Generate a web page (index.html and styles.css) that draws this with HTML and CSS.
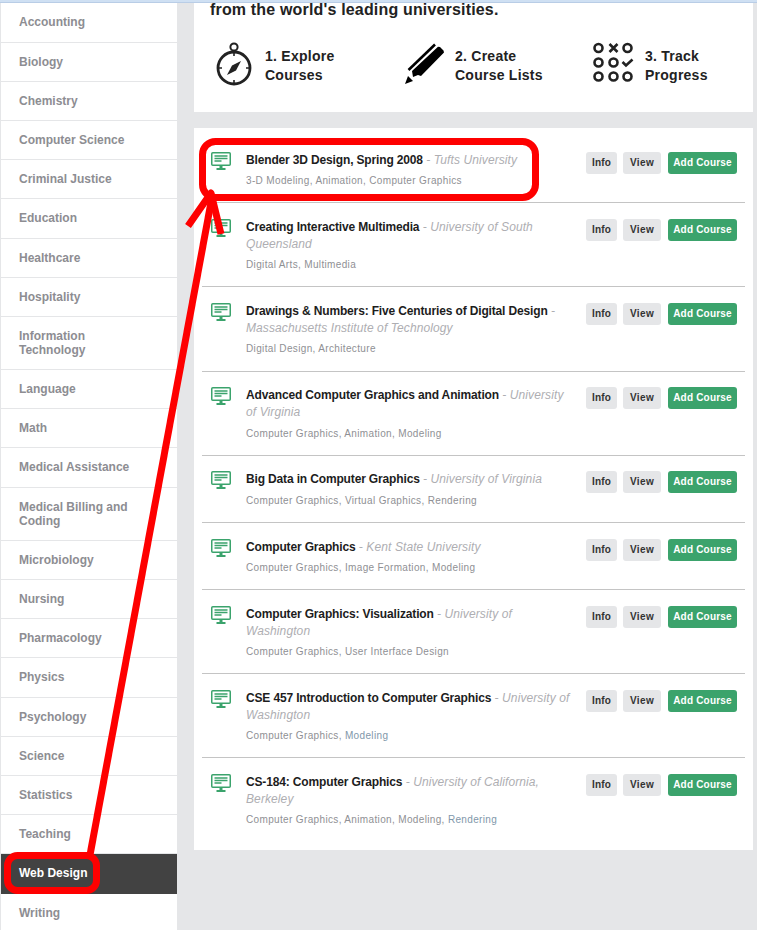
FILE: index.html
```html
<!DOCTYPE html>
<html lang="en">
<head>
<meta charset="utf-8">
<title>Courses</title>
<link rel="stylesheet" href="styles.css">
</head>
<body>
<svg width="0" height="0" class="defs" aria-hidden="true">
  <symbol id="monitor" viewBox="0 0 20 19">
    <rect x="0.75" y="0.75" width="18.5" height="12.5" rx="1" fill="#fff" stroke="#3ba36c" stroke-width="1.5"/>
    <path d="M3.5 4h13M3.5 6.5h13M3.5 9h7" stroke="#3ba36c" stroke-width="1.3" fill="none"/>
    <path d="M8.5 14h3v2h-3z" fill="#3ba36c"/>
    <rect x="5.5" y="16" width="9" height="2" fill="#3ba36c"/>
  </symbol>
</svg>
<div class="topbar"></div>
<div class="page">
  <nav class="side">
    <a class="cat">Accounting</a>
    <a class="cat">Biology</a>
    <a class="cat">Chemistry</a>
    <a class="cat">Computer Science</a>
    <a class="cat">Criminal Justice</a>
    <a class="cat">Education</a>
    <a class="cat">Healthcare</a>
    <a class="cat">Hospitality</a>
    <a class="cat">Information Technology</a>
    <a class="cat">Language</a>
    <a class="cat">Math</a>
    <a class="cat">Medical Assistance</a>
    <a class="cat">Medical Billing and Coding</a>
    <a class="cat">Microbiology</a>
    <a class="cat">Nursing</a>
    <a class="cat">Pharmacology</a>
    <a class="cat">Physics</a>
    <a class="cat">Psychology</a>
    <a class="cat">Science</a>
    <a class="cat">Statistics</a>
    <a class="cat">Teaching</a>
    <a class="cat active">Web Design</a>
    <a class="cat">Writing</a>
  </nav>
  <main class="main">
    <section class="hero">
      <h1 class="hero-title">from the world's leading universities.</h1>
      <div class="steps">
        <div class="step">
          <svg class="step-icon" viewBox="0 0 46 46" width="46" height="46">
            <circle cx="24" cy="6" r="3.6" fill="none" stroke="#222" stroke-width="2"/>
            <circle cx="24" cy="27" r="16" fill="none" stroke="#222" stroke-width="2.8"/>
            <path d="M24 11v4M24 39v4M8 27h4M36 27h4" stroke="#222" stroke-width="1.6"/>
            <path d="M31 20 26 29.500 17 34 22 24.500z" fill="#222"/>
          </svg>
          <p class="step-text">1. Explore<br>Courses</p>
        </div>
        <div class="step">
          <svg class="step-icon" viewBox="0 0 46 46" width="46" height="46">
            <path d="M8.500 29 35 3.500" stroke="#000" stroke-width="2.600" fill="none"/>
            <path d="M38 5.700 40 6 43.500 9.500 44 11.500 21 35 18 34 13 36 12 30z" fill="#000"/>
            <path d="M5 43 8 35 13 40z" fill="#000"/>
          </svg>
          <p class="step-text">2. Create<br>Course Lists</p>
        </div>
        <div class="step">
          <svg class="step-icon" viewBox="0 0 46 46" width="46" height="46">
            <g fill="none" stroke="#222" stroke-width="2.600">
              <circle cx="8.500" cy="7" r="4"/>
              <circle cx="37.500" cy="7" r="4"/>
              <circle cx="8.500" cy="21.500" r="4"/>
              <circle cx="23.500" cy="21.500" r="4"/>
              <circle cx="8.500" cy="35.500" r="4"/>
              <circle cx="23.500" cy="35.500" r="4"/>
              <circle cx="37.500" cy="35.500" r="4"/>
              <path d="M19.500 3 27.500 11M27.500 3 19.500 11"/>
              <path d="M32.500 21 36 24.500 42.500 18.500"/>
            </g>
          </svg>
          <p class="step-text">3. Track<br>Progress</p>
        </div>
      </div>
    </section>
    <section class="list">
      <article class="row">
        <svg class="row-icon"><use href="#monitor"/></svg>
        <div class="info">
          <p class="name"><b>Blender 3D Design, Spring 2008</b> <i>- Tufts University</i></p>
          <p class="tags">3-D Modeling, Animation, Computer Graphics</p>
        </div>
        <div class="actions"><a class="btn btn-info">Info</a><a class="btn btn-view">View</a><a class="btn btn-add">Add Course</a></div>
      </article>
      <article class="row">
        <svg class="row-icon"><use href="#monitor"/></svg>
        <div class="info">
          <p class="name"><b>Creating Interactive Multimedia</b> <i>- University of South Queensland</i></p>
          <p class="tags">Digital Arts, Multimedia</p>
        </div>
        <div class="actions"><a class="btn btn-info">Info</a><a class="btn btn-view">View</a><a class="btn btn-add">Add Course</a></div>
      </article>
      <article class="row">
        <svg class="row-icon"><use href="#monitor"/></svg>
        <div class="info">
          <p class="name"><b>Drawings &amp; Numbers: Five Centuries of Digital Design</b> <i>- Massachusetts Institute of Technology</i></p>
          <p class="tags">Digital Design, Architecture</p>
        </div>
        <div class="actions"><a class="btn btn-info">Info</a><a class="btn btn-view">View</a><a class="btn btn-add">Add Course</a></div>
      </article>
      <article class="row">
        <svg class="row-icon"><use href="#monitor"/></svg>
        <div class="info">
          <p class="name"><b>Advanced Computer Graphics and Animation</b> <i>- University of Virginia</i></p>
          <p class="tags">Computer Graphics, Animation, Modeling</p>
        </div>
        <div class="actions"><a class="btn btn-info">Info</a><a class="btn btn-view">View</a><a class="btn btn-add">Add Course</a></div>
      </article>
      <article class="row">
        <svg class="row-icon"><use href="#monitor"/></svg>
        <div class="info">
          <p class="name"><b>Big Data in Computer Graphics</b> <i>- University of Virginia</i></p>
          <p class="tags">Computer Graphics, Virtual Graphics, Rendering</p>
        </div>
        <div class="actions"><a class="btn btn-info">Info</a><a class="btn btn-view">View</a><a class="btn btn-add">Add Course</a></div>
      </article>
      <article class="row">
        <svg class="row-icon"><use href="#monitor"/></svg>
        <div class="info">
          <p class="name"><b>Computer Graphics</b> <i>- Kent State University</i></p>
          <p class="tags">Computer Graphics, Image Formation, Modeling</p>
        </div>
        <div class="actions"><a class="btn btn-info">Info</a><a class="btn btn-view">View</a><a class="btn btn-add">Add Course</a></div>
      </article>
      <article class="row">
        <svg class="row-icon"><use href="#monitor"/></svg>
        <div class="info">
          <p class="name"><b>Computer Graphics: Visualization</b> <i>- University of Washington</i></p>
          <p class="tags">Computer Graphics, User Interface Design</p>
        </div>
        <div class="actions"><a class="btn btn-info">Info</a><a class="btn btn-view">View</a><a class="btn btn-add">Add Course</a></div>
      </article>
      <article class="row">
        <svg class="row-icon"><use href="#monitor"/></svg>
        <div class="info">
          <p class="name"><b>CSE 457 Introduction to Computer Graphics</b> <i>- University of Washington</i></p>
          <p class="tags">Computer Graphics, <span class="tag-link">Modeling</span></p>
        </div>
        <div class="actions"><a class="btn btn-info">Info</a><a class="btn btn-view">View</a><a class="btn btn-add">Add Course</a></div>
      </article>
      <article class="row">
        <svg class="row-icon"><use href="#monitor"/></svg>
        <div class="info">
          <p class="name"><b>CS-184: Computer Graphics</b> <i>- University of California, Berkeley</i></p>
          <p class="tags">Computer Graphics, Animation, Modeling, <span class="tag-link">Rendering</span></p>
        </div>
        <div class="actions"><a class="btn btn-info">Info</a><a class="btn btn-view">View</a><a class="btn btn-add">Add Course</a></div>
      </article>
    </section>
  </main>
</div>
<svg class="annotation" width="757" height="930" viewBox="0 0 757 930" aria-hidden="true">
  <g fill="none" stroke="#fe0000" stroke-width="7" stroke-linejoin="round">
    <rect x="202.500" y="141.500" width="333" height="56" rx="13"/>
    <rect x="7.500" y="855.500" width="89" height="35" rx="10"/>
    <path d="M90 855 212 197"/>
    <path d="M188 226 211 193 221 234"/>
  </g>
</svg>
</body>
</html>
```
FILE: styles.css
```css
* { box-sizing: border-box; }
html, body { margin: 0; padding: 0; height: 930px; overflow: hidden; }
body {
  background: #e5e6e8;
  font-family: "Liberation Sans", Arial, sans-serif;
  color: #222;
}
.defs { position: absolute; }
.topbar { height: 3px; background: #cfe0f3; border-bottom: 1px solid #b9cde6; }
.page { display: flex; align-items: flex-start; padding-left: 1px; }

.side { width: 176px; flex: none; background: #fff; padding-top: 0.4px; }
.cat {
  display: block;
  padding: 12px 30px 12.2px 18px;
  font-size: 12px;
  line-height: 14px;
  font-weight: bold;
  color: #8d8d92;
  border-bottom: 1px solid #e5e6e8;
}
.cat.active { background: #424242; color: #fff; border-bottom-color: #424242; }

.main { margin-left: 17px; width: 559px; flex: none; }
.hero { background: #fff; height: 109px; padding: 0 16px; }
.hero-title {
  margin: 0;
  font-size: 16px;
  line-height: 13px;
  font-weight: bold;
  letter-spacing: 0.17px;
  color: #222;
}
.steps { display: flex; margin-top: 25px; }
.step { width: 190px; flex: none; display: flex; align-items: flex-start; gap: 9px; }
.step-icon { flex: none; width: 46px; height: 46px; }
.step-text {
  margin: 6px 0 0;
  font-size: 14px;
  line-height: 19px;
  font-weight: bold;
  letter-spacing: 0.25px;
  color: #222;
}

.list { margin-top: 16px; background: #fff; padding: 8px 8px; height: 722px; }
.row {
  display: flex;
  align-items: flex-start;
  padding: 15.700px 8px 13.200px 9px;
  border-bottom: 1px solid #c4c4c4;
}
.row:last-child { border-bottom: 0; }
.row-icon { flex: none; width: 20px; height: 19px; margin-right: 15px; }
.info { width: 328px; flex: none; margin-right: 12px; }
.name { margin: 0; font-size: 12px; line-height: 17px; color: #222; }
.name b { color: #1d1d1d; letter-spacing: -0.15px; }
.name i { color: #aeaeb2; letter-spacing: 0.1px; }
.tags {
  margin: 3.300px 0 0;
  font-size: 10px;
  line-height: 17px;
  letter-spacing: 0.35px;
  color: #8f9094;
}
.tag-link { color: #7f97aa; }
.actions { display: flex; flex: none; }
.btn {
  height: 22px;
  line-height: 22px;
  text-align: center;
  font-size: 10px;
  font-weight: bold;
  letter-spacing: 0.2px;
  border-radius: 3px;
  color: #333;
  background: #e5e6e8;
}
.btn-info { width: 31px; margin-right: 6px; }
.btn-view { width: 38px; margin-right: 7px; letter-spacing: 0.4px; }
.btn-add { width: 69px; background: #3ba36c; color: #fff; }

.annotation { position: absolute; left: 0; top: 0; pointer-events: none; }
```
